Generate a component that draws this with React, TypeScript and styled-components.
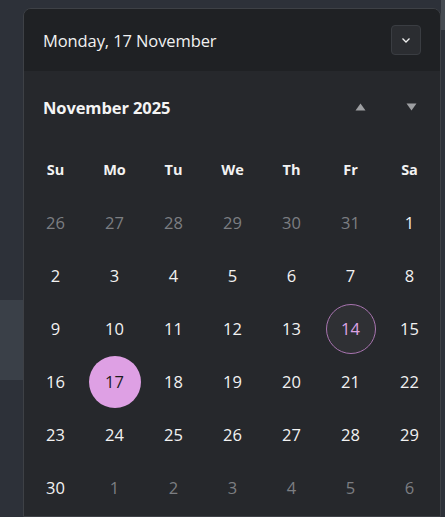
import styled, { createGlobalStyle } from "styled-components";

const GlobalStyle = createGlobalStyle`
  html, body {
    margin: 0;
    padding: 0;
    background: #2d3139;
    overflow: hidden;
  }
  body {
    font-family: "Open Sans", "Noto Sans", sans-serif;
  }
`;

const Page = styled.div`
  display: flex;
  width: 445px;
  height: 517px;
  background: #2d3139;
`;

const LeftRail = styled.div`
  width: 23px;
  flex-shrink: 0;
  display: flex;
  flex-direction: column;
  padding-top: 300px;
  box-sizing: border-box;
`;

const RailPanel = styled.div`
  height: 80px;
  background: #3a4048;
`;

const RightRail = styled.div`
  flex: 1;
  display: flex;
  flex-direction: column;
`;

const RailTop = styled.div`
  height: 30px;
  background: #464b52;
`;

const Popup = styled.div`
  width: 418px;
  flex-shrink: 0;
  margin-top: 8px;
  height: 509px;
  box-sizing: border-box;
  border: 1px solid #3e4146;
  border-radius: 8px 8px 0 0;
  background: #26282c;
  overflow: hidden;
  display: flex;
  flex-direction: column;
`;

const Header = styled.div`
  height: 62px;
  flex-shrink: 0;
  display: flex;
  align-items: center;
  justify-content: space-between;
  padding: 0 19px 0 19px;
  background: #1f2124;
`;

const HeaderTitle = styled.div`
  color: #f1f1f1;
  font-size: 16.5px;
  letter-spacing: -0.1px;
`;

const ToggleButton = styled.button`
  width: 30px;
  height: 30px;
  padding: 0;
  display: flex;
  align-items: center;
  justify-content: center;
  background: #2b2d31;
  border: 1px solid #3a3d42;
  border-radius: 4px;
  cursor: pointer;
`;

const MonthRow = styled.div`
  height: 72px;
  flex-shrink: 0;
  display: flex;
  align-items: center;
  justify-content: space-between;
  padding: 0 14px 0 19px;
`;

const MonthTitle = styled.div`
  color: #f4f4f4;
  font-size: 16.5px;
  font-weight: 700;
  letter-spacing: -0.1px;
`;

const NavGroup = styled.div`
  display: flex;
  gap: 21px;
`;

const NavButton = styled.button`
  width: 30px;
  height: 30px;
  padding: 0;
  border: none;
  background: transparent;
  display: flex;
  align-items: center;
  justify-content: center;
  cursor: pointer;
`;

const Grid = styled.div`
  display: grid;
  grid-template-columns: repeat(7, 59px);
  grid-auto-rows: 53px;
  padding: 0 2px;
`;

const DayName = styled.div`
  display: flex;
  align-items: center;
  justify-content: center;
  color: #f2f2f2;
  font-size: 14.5px;
  font-weight: 700;
`;

const Cell = styled.div`
  display: flex;
  align-items: center;
  justify-content: center;
`;

const Day = styled.div<{ $muted?: boolean; $selected?: boolean; $today?: boolean }>`
  width: ${(p) => (p.$selected ? 52 : 50)}px;
  height: ${(p) => (p.$selected ? 52 : 50)}px;
  box-sizing: border-box;
  border-radius: 50%;
  display: flex;
  align-items: center;
  justify-content: center;
  font-size: 16.5px;
  color: ${(p) =>
    p.$selected ? "#1c1c1c" : p.$today ? "#dea3e4" : p.$muted ? "#7c7e82" : "#f2f2f2"};
  background: ${(p) => (p.$selected ? "#dea0e4" : p.$today ? "#2f3034" : "transparent")};
  border: ${(p) => (p.$today ? "1px solid #a874b0" : "none")};
`;

const weekdays = ["Su", "Mo", "Tu", "We", "Th", "Fr", "Sa"];

type DayInfo = { n: number; muted?: boolean };

const buildDays = (): DayInfo[] => {
  const days: DayInfo[] = [];
  for (let i = 26; i <= 31; i++) days.push({ n: i, muted: true });
  for (let i = 1; i <= 30; i++) days.push({ n: i });
  for (let i = 1; i <= 6; i++) days.push({ n: i, muted: true });
  return days;
};

const App = () => {
  const days = buildDays();
  return (
    <>
      <GlobalStyle />
      <Page>
        <LeftRail>
          <RailPanel />
        </LeftRail>
        <Popup>
          <Header>
            <HeaderTitle>Monday, 17 November</HeaderTitle>
            <ToggleButton aria-label="Toggle">
              <svg width="12" height="12" viewBox="0 0 12 12">
                <path d="M2.5 4.5 L6 8 L9.5 4.5" fill="none" stroke="#f0f0f0" strokeWidth="1.3" />
              </svg>
            </ToggleButton>
          </Header>
          <MonthRow>
            <MonthTitle>November 2025</MonthTitle>
            <NavGroup>
              <NavButton aria-label="Previous month">
                <svg width="11" height="8" viewBox="0 0 11 8">
                  <path d="M5.5 0.5 L10.5 7.5 L0.5 7.5 Z" fill="#9d9fa2" />
                </svg>
              </NavButton>
              <NavButton aria-label="Next month">
                <svg width="11" height="8" viewBox="0 0 11 8">
                  <path d="M0.5 0.5 L10.5 0.5 L5.5 7.5 Z" fill="#9d9fa2" />
                </svg>
              </NavButton>
            </NavGroup>
          </MonthRow>
          <Grid>
            {weekdays.map((w) => (
              <DayName key={w}>{w}</DayName>
            ))}
            {days.map((d, i) => (
              <Cell key={i}>
                <Day
                  $muted={d.muted}
                  $selected={!d.muted && d.n === 17}
                  $today={!d.muted && d.n === 14}
                >
                  {d.n}
                </Day>
              </Cell>
            ))}
          </Grid>
        </Popup>
        <RightRail>
          <RailTop />
        </RightRail>
      </Page>
    </>
  );
};

export default App;
